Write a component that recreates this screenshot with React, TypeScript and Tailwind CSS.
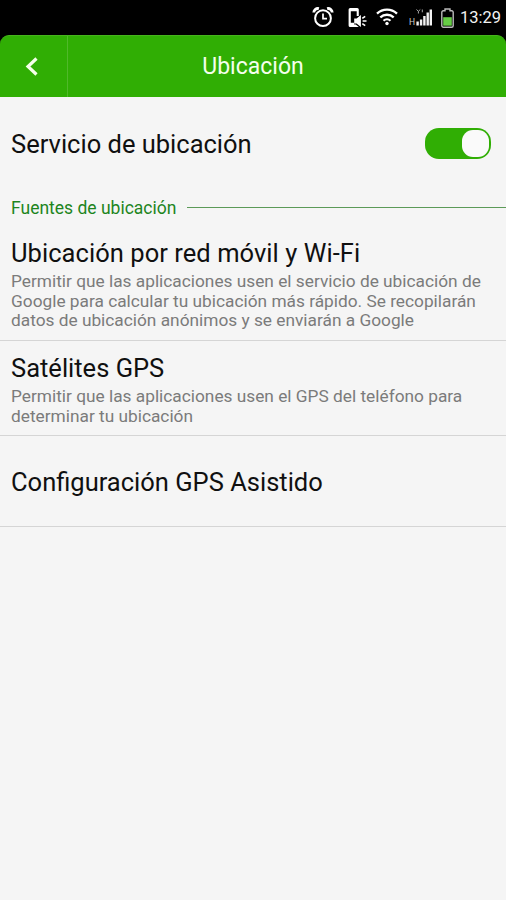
import React, { useState } from "react";

interface Source {
  title: string;
  lines: string[];
  className: string;
}

const sources: Source[] = [
  {
    title: "Ubicación por red móvil y Wi-Fi",
    lines: [
      "Permitir que las aplicaciones usen el servicio de ubicación de",
      "Google para calcular tu ubicación más rápido. Se recopilarán",
      "datos de ubicación anónimos y se enviarán a Google",
    ],
    className: "h-[115px] pt-[12px] tracking-[0.05px]",
  },
  {
    title: "Satélites GPS",
    lines: [
      "Permitir que las aplicaciones usen el GPS del teléfono para",
      "determinar tu ubicación",
    ],
    className: "h-[95px] pt-[12px]",
  },
  {
    title: "Configuración GPS Asistido",
    lines: [],
    className: "h-[91px] pt-[31px]",
  },
];

function StatusBar() {
  return (
    <div className="flex h-[35px] items-start bg-black pl-[312px]">
      {/* alarm */}
      <svg className="mt-[6px] h-[23px] w-[22px] shrink-0" viewBox="0 0 22 23" fill="none" stroke="#fff">
        <circle cx="11" cy="12.2" r="7.9" strokeWidth="2" />
        <path d="M11 7.5v5.2h4" strokeWidth="1.7" />
        <path d="M1.8 6.6A4 4 0 0 1 6.9 2.7M20.200 6.600A4 4 0 0 0 15.100 2.700" strokeWidth="2.8" />
      </svg>
      {/* phone ringing */}
      <svg className="mt-[7px] ml-[14px] h-[22px] w-[20px] shrink-0" viewBox="0 0 20 22">
        <path d="M2.2 1h7a1.600 1.600 0 0 1 1.600 1.600V9H8.700V4.300H2.800v11.500h3.400v1.700h1.600l3 2.500H2.200A1.600 1.600 0 0 1 .6 18.400V2.600A1.600 1.600 0 0 1 2.200 1z" fill="#fff" />
        <path d="M6.200 11.500h2.400L12.900 8v12l-4.300-3.500H6.200z" fill="#fff" />
        <path d="M14.300 11.400l2.900-2.100M14.600 14h3.900M14.300 16.600l2.900 2.100" stroke="#fff" strokeWidth="1.600" />
      </svg>
      {/* wifi */}
      <svg className="mt-[8px] ml-[8px] h-[18px] w-[22px] shrink-0" viewBox="0 0 22 18" fill="none" stroke="#fff">
        <path d="M1 5.700a14.500 14.500 0 0 1 20 0" strokeWidth="2.300" />
        <path d="M4.300 9.400a9.800 9.800 0 0 1 13.400 0" strokeWidth="2.300" />
        <path d="M7.500 12.700a5.200 5.200 0 0 1 7 0" strokeWidth="2.200" />
        <circle cx="11" cy="15.500" r="1.700" fill="#fff" stroke="none" />
      </svg>
      {/* mobile network */}
      <div className="mt-[18px] ml-[11px] w-[7px] shrink-0 font-['Roboto',sans-serif] text-[8.500px] leading-[9px] text-[#ccc]">H</div>
      <svg className="mt-[8px] h-[18px] w-[17px] shrink-0" viewBox="0 0 17 18">
        <path d="M.4 13.500h2.400v4H.4zM3.900 11.500h2.400v6H3.900zM7.200 8h2.400v9.500H7.200zM10.500 4.500h2.400v13h-2.400zM13.600 1.500H16v16h-2.400z" fill="#f2f2f2" />
        <path d="M.5 1.500l1.900 1.800L4.300 1.500M2.400 3.300v2.200M6.300 1.500v2.800" stroke="#aaa" fill="none" />
      </svg>
      {/* battery */}
      <svg className="mt-[8px] ml-[8px] h-[20px] w-[13px] shrink-0" viewBox="0 0 13 20" fill="none">
        <path d="M4 2.700V1h5v1.700h1.700a1.500 1.500 0 0 1 1.500 1.500v13.500a1.500 1.500 0 0 1-1.500 1.500H2.300a1.500 1.500 0 0 1-1.500-1.500V4.200a1.500 1.500 0 0 1 1.500-1.500z" stroke="#bbb" strokeWidth="1.400" />
        <path d="M2.200 9.200h8.600v8.500H2.200z" fill="#66cc45" />
      </svg>
      <span className="mt-[8px] ml-[6px] text-[16.500px] leading-[20px] whitespace-nowrap text-[#f3f3f3]">13:29</span>
    </div>
  );
}

export default function App() {
  const [enabled, setEnabled] = useState(true);

  return (
    <div className="h-[900px] w-[506px] overflow-hidden bg-[#f5f5f5] font-['Roboto',sans-serif] text-[#101010]">
      <StatusBar />

      <div className="bg-black">
        <header className="grid h-[62px] grid-cols-[68px_370px_68px] items-center rounded-t-[9px] border-t border-[#46b51c] bg-[#30ae04]">
          <button aria-label="Atrás" className="flex h-full items-center border-r border-[#50b92b] pl-[25px]">
            <svg className="h-[19px] w-[14px]" viewBox="0 0 14 19" fill="none" stroke="#f4ffe9" strokeWidth="3.200">
              <path d="M11.500 1.500L3 9.500l8.500 8" />
            </svg>
          </button>
          <h1 className="pt-px text-center text-[23px] leading-[28px] text-[#f4ffec]">Ubicación</h1>
        </header>
      </div>

      <div className="flex h-[93px] items-center justify-between pr-[15px] pl-[11px]">
        <h2 className="pt-px text-[25.500px] leading-[30px]">Servicio de ubicación</h2>
        <button
          role="switch"
          aria-checked={enabled}
          aria-label="Servicio de ubicación"
          onClick={() => setEnabled(!enabled)}
          className={`flex h-[31px] w-[66px] items-center rounded-[14px] px-[2px] ${enabled ? "justify-end bg-[#30ae04]" : "justify-start bg-[#bbb]"}`}
        >
          <span className="h-[27px] w-[27px] rounded-[11px] bg-[#fafafa]" />
        </button>
      </div>

      <div className="mb-px flex h-[35px] items-center gap-[11px] pl-[11px]">
        <span className="text-[17.500px] leading-[20px] whitespace-nowrap text-[#1d851d]">Fuentes de ubicación</span>
        <span className="h-px flex-1 bg-[#5c9a58]" />
      </div>

      {sources.map((source) => (
        <section key={source.title} className={`border-b border-[#d5d5d5] pl-[11px] ${source.className}`}>
          <h2 className="text-[25.500px] leading-[30px]">{source.title}</h2>
          <div className="pt-[4px] text-[17.300px] leading-[19.500px] tracking-normal whitespace-nowrap text-[#7b7b7b]">
            {source.lines.map((line) => (
              <p key={line}>{line}</p>
            ))}
          </div>
        </section>
      ))}
    </div>
  );
}
